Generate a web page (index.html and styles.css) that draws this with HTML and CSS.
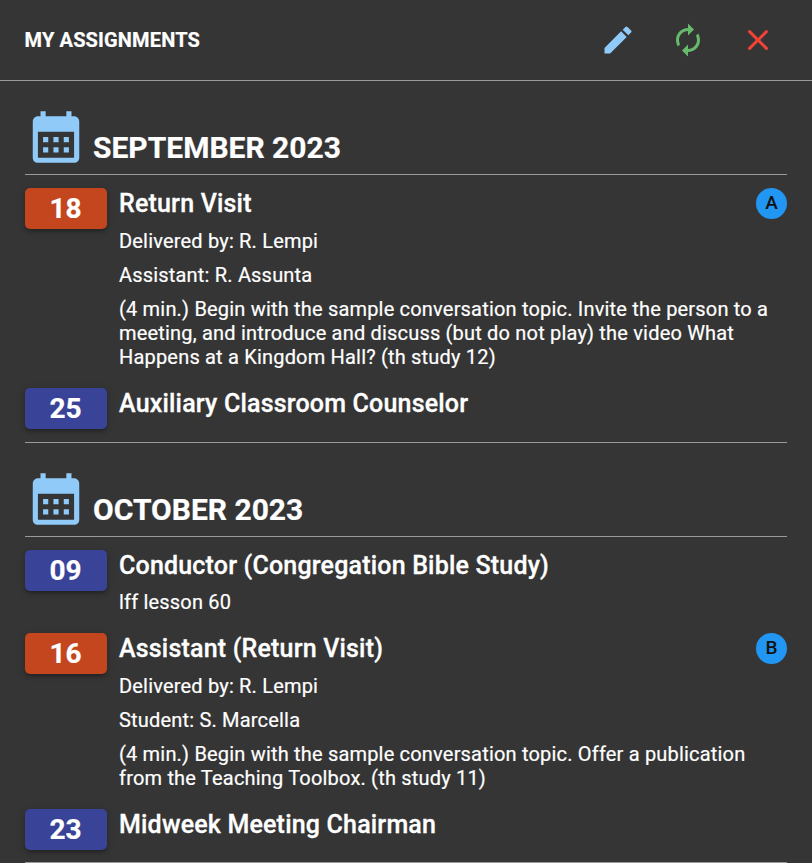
FILE: index.html
```html
<!DOCTYPE html>
<html lang="en">
<head>
<meta charset="utf-8">
<title>My Assignments</title>
<link rel="stylesheet" href="styles.css">
</head>
<body>
<svg width="0" height="0" class="defs"><symbol id="calendar" viewBox="0 0 24 24"><path d="M19 4h-1V2h-2v2H8V2H6v2H5c-1.110 0-1.990.9-1.990 2L3 20c0 1.100.89 2 2 2h14c1.100 0 2-.9 2-2V6c0-1.100-.9-2-2-2zm0 16H5V10h14v10zM9 14H7v-2h2v2zm4 0h-2v-2h2v2zm4 0h-2v-2h2v2zm-8 4H7v-2h2v2zm4 0h-2v-2h2v2zm4 0h-2v-2h2v2z"/></symbol></svg>
<header class="bar">
  <h1 class="bar-title">MY ASSIGNMENTS</h1>
  <div class="actions">
    <svg class="action edit" viewBox="0 0 24 24"><path d="M3 17.250V21h3.750L17.810 9.940l-3.750-3.750L3 17.250zM20.710 7.040c.39-.39.39-1.020 0-1.410l-2.340-2.340a.996.996 0 0 0-1.410 0l-1.830 1.830 3.750 3.750 1.830-1.830z"/></svg>
    <svg class="action sync" viewBox="0 0 24 24"><path d="M12 6v3l4-4-4-4v3c-4.420 0-8 3.580-8 8 0 1.570.46 3.030 1.240 4.260L6.700 14.800c-.45-.83-.7-1.790-.7-2.800 0-3.310 2.690-6 6-6zm6.760 1.740L17.300 9.200c.44.840.7 1.790.7 2.800 0 3.310-2.690 6-6 6v-3l-4 4 4 4v-3c4.420 0 8-3.580 8-8 0-1.570-.46-3.030-1.240-4.260z"/></svg>
    <svg class="action close" viewBox="0 0 24 24"><path d="M18.300 5.710a.996.996 0 0 0-1.410 0L12 10.590 7.110 5.700A.996.996 0 1 0 5.700 7.110L10.590 12 5.700 16.890a.996.996 0 1 0 1.410 1.410L12 13.410l4.890 4.890a.996.996 0 1 0 1.410-1.410L13.410 12l4.890-4.890c.38-.38.38-1.020 0-1.400z"/></svg>
  </div>
</header>
<main class="content">
  <section class="month">
    <h2 class="month-head"><svg class="cal"><use href="#calendar"/></svg><span>SEPTEMBER 2023</span></h2>
    <article class="item">
      <div class="day part">18</div>
      <div class="details">
        <h3>Return Visit</h3>
        <p>Delivered by: R. Lempi</p>
        <p>Assistant: R. Assunta</p>
        <p>(4 min.) Begin with the sample conversation topic. Invite the person to a meeting, and introduce and discuss (but do not play) the video What Happens at a Kingdom Hall? (th study 12)</p>
      </div>
      <span class="badge">A</span>
    </article>
    <article class="item">
      <div class="day">25</div>
      <div class="details"><h3>Auxiliary Classroom Counselor</h3></div>
    </article>
  </section>
  <section class="month">
    <h2 class="month-head"><svg class="cal"><use href="#calendar"/></svg><span>OCTOBER 2023</span></h2>
    <article class="item">
      <div class="day">09</div>
      <div class="details"><h3>Conductor (Congregation Bible Study)</h3><p class="source">lff lesson 60</p></div>
    </article>
    <article class="item">
      <div class="day part">16</div>
      <div class="details">
        <h3>Assistant (Return Visit)</h3>
        <p>Delivered by: R. Lempi</p>
        <p>Student: S. Marcella</p>
        <p>(4 min.) Begin with the sample conversation topic. Offer a publication from the Teaching Toolbox. (th study 11)</p>
      </div>
      <span class="badge">B</span>
    </article>
    <article class="item">
      <div class="day">23</div>
      <div class="details"><h3>Midweek Meeting Chairman</h3></div>
    </article>
  </section>
</main>
</body>
</html>
```
FILE: styles.css
```css
* { box-sizing: border-box; margin: 0; padding: 0; }
html { overflow: hidden; }
body { background: #353535; color: #fff; font-family: Roboto, "Liberation Sans", sans-serif; -webkit-text-stroke: 0.2px currentColor; }
.defs { display: block; height: 0; }
.bar { height: 81px; padding: 0 36px 1px 24.5px; display: flex; align-items: center; justify-content: space-between; border-bottom: 1px solid #9a9a9a; }
.bar-title { font-size: 20px; line-height: 30px; font-weight: 700; letter-spacing: 0.0075em; }
.actions { display: flex; gap: 34px; }
.action { width: 36px; height: 36px; display: block; }
.edit { fill: #90caf9; }
.sync { fill: #66bb6a; }
.close { fill: #f44336; }
.content { padding: 25px 25px 0; }
.month { border-bottom: 1px solid #9a9a9a; padding-bottom: 13px; margin-bottom: 25px; }
.month:last-child { padding-bottom: 12px; margin-bottom: 0; }
.month-head { height: 69px; display: flex; align-items: flex-end; gap: 6px; border-bottom: 1px solid #9a9a9a; margin-bottom: 13px; font-size: 30px; line-height: 35px; font-weight: 700; padding-bottom: 6px; }
.month-head span { padding-bottom: 3px; }
.cal { width: 62px; height: 62px; fill: #90caf9; }
.item { display: flex; align-items: flex-start; margin-bottom: 19px; }
.item:last-child { margin-bottom: 0; }
.day { width: 82px; height: 41px; flex: none; margin-right: 12px; padding-right: 1px; border-radius: 5px; background: #394397; text-align: center; font-size: 28px; line-height: 41px; font-weight: 700; box-shadow: 0 3px 3px -2px rgba(0,0,0,.2), 0 3px 4px rgba(0,0,0,.14), 0 1px 8px rgba(0,0,0,.12); }
.part { background: #c3461f; }
.details { flex: 1; }
h3 { font-size: 25px; line-height: 31px; font-weight: 500; letter-spacing: 0.0075em; -webkit-text-stroke-width: 0.3px; }
p { font-size: 20px; line-height: 24px; margin-top: 10px; letter-spacing: 0.00938em; }
h3 + .source { margin-top: 9px; }
.badge { width: 31px; height: 31px; flex: none; margin-left: -31px; border-radius: 50%; background: #2196f3; color: #111; font-size: 19px; line-height: 30px; text-align: center; font-weight: 500; -webkit-text-stroke-width: 0; }
```
